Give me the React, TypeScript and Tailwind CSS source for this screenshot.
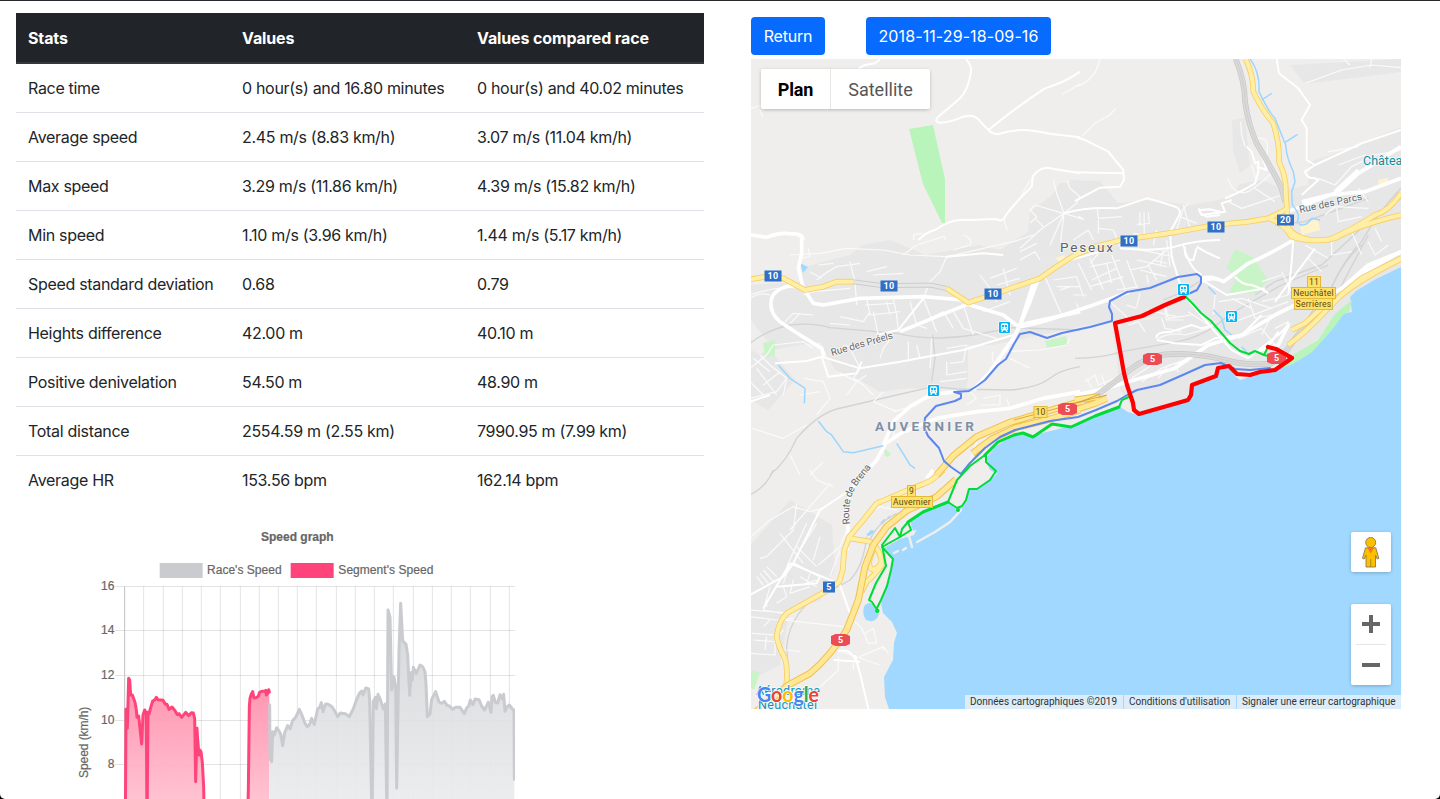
import React from "react";

const rows = [
  ["Race time", "0 hour(s) and 16.80 minutes", "0 hour(s) and 40.02 minutes"],
  ["Average speed", "2.45 m/s (8.83 km/h)", "3.07 m/s (11.04 km/h)"],
  ["Max speed", "3.29 m/s (11.86 km/h)", "4.39 m/s (15.82 km/h)"],
  ["Min speed", "1.10 m/s (3.96 km/h)", "1.44 m/s (5.17 km/h)"],
  ["Speed standard deviation", "0.68", "0.79"],
  ["Heights difference", "42.00 m", "40.10 m"],
  ["Positive denivelation", "54.50 m", "48.90 m"],
  ["Total distance", "2554.59 m (2.55 km)", "7990.95 m (7.99 km)"],
  ["Average HR", "153.56 bpm", "162.14 bpm"],
];

function StatsTable() {
  return (
    <table className="w-[688px] table-fixed border-separate border-spacing-0 text-left text-[16px] leading-6 tracking-[-0.31px] text-[#212529]">
      <colgroup>
        <col className="w-[214px]" />
        <col className="w-[235px]" />
        <col className="w-[239px]" />
      </colgroup>
      <thead className="bg-[#212529] tracking-[-0.12px] text-white">
        <tr className="h-[51px]">
          <th className="border-b-2 border-[#32383e] px-3 font-bold">Stats</th>
          <th className="border-b-2 border-[#32383e] px-3 font-bold">Values</th>
          <th className="border-b-2 border-[#32383e] px-3 font-bold">Values compared race</th>
        </tr>
      </thead>
      <tbody>
        {rows.map((r, n) => (
          <tr key={r[0]} className={n === 0 ? "h-[48px]" : "h-[49px]"}>
            {r.map((c, i) => (
              <td key={i} className={n === 0 ? "px-3 whitespace-nowrap" : "border-t border-[#dee2e6] px-3 whitespace-nowrap"}>{c}</td>
            ))}
          </tr>
        ))}
      </tbody>
    </table>
  );
}

const gridX = [251, 310, 367, 424, 481, 541, 598, 655, 712, 769, 829, 886, 943, 1000, 1060, 1117, 1174, 1231, 1291, 1348];
const ticks: [string, number][] = [["16", 229], ["14", 361], ["12", 496], ["10", 631], ["8", 763]];
const raceLine =
  "M629,585 L630,745 L635,755 L638,665 L643,675 L650,653 L657,663 L662,672 L668,707 L674,668 L683,647 L690,657 L698,632 L708,620 L718,598 L727,618 L734,638 L742,650 L748,645 L755,625 L763,643 L773,597 L779,592 L784,578 L789,605 L796,583 L803,582 L816,590 L824,603 L833,620 L841,609 L856,611 L868,620 L880,596 L889,571 L898,550 L905,543 L909,555 L917,534 L926,537 L929,570 L936,940 L940,575 L946,562 L949,596 L954,553 L962,571 L970,597 L976,582 L981,940 L984,300 L990,322 L995,540 L1002,502 L1007,530 L1010,835 L1017,420 L1022,280 L1028,392 L1038,403 L1043,435 L1049,556 L1053,488 L1057,510 L1060,472 L1069,490 L1080,465 L1088,470 L1095,486 L1098,520 L1102,620 L1110,612 L1115,568 L1127,545 L1137,576 L1145,580 L1153,574 L1161,586 L1168,588 L1178,598 L1187,592 L1200,592 L1213,611 L1220,594 L1226,588 L1231,570 L1239,584 L1245,567 L1257,569 L1265,588 L1274,600 L1285,576 L1293,607 L1296,560 L1300,556 L1306,577 L1313,579 L1320,554 L1326,566 L1331,553 L1335,604 L1341,591 L1348,585 L1355,594 L1360,600 L1362,600 L1363,808";
const segA =
  "M196,960 L198,598 L202,655 L206,505 L209,510 L212,555 L217,555 L225,577 L229,600 L231,622 L236,618 L245,702 L249,615 L254,600 L259,610 L261,960 L264,607 L267,612 L273,590 L278,573 L284,570 L289,562 L294,569 L303,570 L309,571 L316,583 L321,583 L327,598 L336,591 L345,602 L352,614 L357,611 L365,622 L377,607 L386,617 L394,608 L400,609 L404,625 L407,815 L411,655 L413,690 L417,735 L419,720 L423,725 L427,758 L431,830 L433,960";
const segB = "M562,960 L565,840 L568,590 L570,565 L573,555 L578,545 L582,564 L590,562 L595,559 L598,548 L605,544 L614,544 L617,541 L619,555 L624,548 L626,539 L628,546";

function SpeedChart() {
  return (
    <svg className="mt-[6px] ml-11 block h-[289px] w-[455px]" viewBox="0 0 1365 867">
      <defs>
        <linearGradient id="pink" gradientUnits="userSpaceOnUse" x1="0" x2="0" y1="500" y2="867">
          <stop offset="0" stopColor="#ff8eac" />
          <stop offset="1" stopColor="#ffc0d0" />
        </linearGradient>
        <linearGradient id="gray" gradientUnits="userSpaceOnUse" x1="0" x2="0" y1="280" y2="867">
          <stop offset="0" stopColor="#d2d4d7" />
          <stop offset="1" stopColor="#eaebec" />
        </linearGradient>
      </defs>
      <g fontFamily="'Liberation Sans', sans-serif" fill="#666" stroke="#666" strokeWidth=".6" fontSize="36">
        <text x="712" y="93" fontWeight="700" textAnchor="middle" textLength="218">Speed graph</text>
        <rect x="299" y="159" width="129" height="45" fill="#c9cbcf" stroke="none" />
        <text x="441" y="192" textLength="224">Race's Speed</text>
        <rect x="692" y="159" width="129" height="45" fill="#ff447c" stroke="none" />
        <text x="835" y="192" textLength="285">Segment's Speed</text>
        {ticks.map(([t, y]) => (
          <text key={t} x="163" y={y + 12} textAnchor="end">{t}</text>
        ))}
        <text transform="translate(84 804) rotate(-90)" textLength="214">Speed (km/h)</text>
      </g>
      <g stroke="#000" strokeOpacity=".11" strokeWidth="3">
        {ticks.map(([t, y]) => <path key={t} d={`M165,${y + 0.5}H1365`} />)}
        {gridX.map((x) => <path key={x} d={`M${x},229V867`} />)}
      </g>
      <path d="M194,229V867" stroke="#bfbfbf" strokeWidth="3" />
      <path d={raceLine + " L1363,960 L629,960Z"} fill="url(#gray)" fillOpacity=".93" />
      <path d={segA + "Z"} fill="url(#pink)" fillOpacity=".96" />
      <path d={segB + " L628,960Z"} fill="url(#pink)" fillOpacity=".96" />
      <g fill="none" strokeWidth="9" strokeLinejoin="round" strokeLinecap="round">
        <path d={raceLine} stroke="#c9cbcf" />
        <path d={segA} stroke="#ff447c" />
        <path d={segB} stroke="#ff447c" />
      </g>
    </svg>
  );
}

/* Road geometry is stored per map tile, each tile in its own 3x coordinate space. */
type Tile = { at: [number, number]; rail: string; thin: string; mid: string; wide: string; grey: string; road: string; motor: string; stream: string };

const tiles: Tile[] = [
  {
    at: [750, 0],
    rail: "",
    thin: "M937,283L990,252 M3,325L35,315 M30,330L38,350 M762,655Q765,680 775,692 M490,720L492,703L520,700 M585,720V708",
    mid: "M325,205L345,195 375,190 390,178 M648,178Q665,195 663,215Q655,270 630,295Q590,330 565,350Q550,365 570,368Q600,368 640,350Q670,342 685,358L715,390Q728,403 745,402Q800,385 850,392L905,402 990,412 M715,390Q800,320 885,265Q950,245 990,215 M505,720Q530,695 555,690L585,672Q620,657 660,660L735,657Q760,665 762,655Q775,630 845,560L848,530Q865,505 890,503L990,520",
    wide: "M3,705L50,712Q90,695 130,702Q155,700 160,720",
    grey: "", road: "", motor: "", stream: "",
  },
  {
    at: [1075, 55],
    rail: "M540,720L600,680L740,630L870,510L978,430 M760,720Q800,620 860,560Q910,470 978,400 M600,510L690,500L880,430",
    thin: "M0,95Q60,80 75,12 M20,245L60,205L105,180L122,160 M497,200L500,240L510,275 M530,330L545,380 M545,250Q575,245 577,270V300 M458,370L470,395Q490,420 520,410Q560,385 600,345 M690,85L800,45L890,30L978,38 M805,12L825,30 M885,38L890,12 M730,370L780,390L830,335L900,300L978,285 M790,330L870,300 M760,290L850,275 M460,440L500,460L590,430 M560,440L620,420 M540,400L600,440 M785,460L790,500L860,485 M750,480L780,455L880,460 M880,560L900,600L940,570 M560,680L620,660 M700,610L740,650 M690,570L760,610 M830,530L860,600 M900,520L920,560 M770,560V600L830,590 M850,400L880,440",
    mid: "M0,245L30,255L100,290L145,345L147,375L135,395L75,398L0,438 M0,352L143,355 M605,12L612,55L670,100L705,150L680,195L695,220L695,315L720,330L690,350Q695,370 720,370L730,375L680,420 M720,330L860,265L978,225 M450,430Q500,410 540,385L550,350L550,320L540,325L530,290L515,275 M560,300L575,345L545,335 M370,460L380,480L450,470L440,445L470,435 M655,555L650,620L640,720 M480,665Q500,690 530,690Q560,700 580,715",
    wide: "M655,555Q580,600 520,625L480,655L445,680Q410,660 380,670 M640,470L690,450L790,410L850,355L978,275 M680,440L760,420L870,410L978,370 M800,720L850,660L978,590 M780,410L850,345",
    grey: "M482,12Q510,80 510,140Q520,210 545,265Q590,340 620,400L630,440",
    road: "M0,600L60,575L140,555L300,532L420,510L520,500L580,490L640,460 M580,490Q620,500 650,545Q690,560 760,555Q840,520 900,480Q940,470 978,415 M640,520Q680,570 780,550Q850,510 978,480 M800,720Q860,670 978,612 M512,12Q535,60 535,110Q560,165 595,205Q615,270 612,320Q635,370 632,410L640,520",
    motor: "",
    stream: "M525,12Q555,50 552,110Q580,170 600,190Q620,240 632,270Q635,310 655,350L660,380L650,410L652,450Q680,480 665,505 M560,135L590,115 M630,262L668,238 M670,505Q690,520 710,490L735,495",
  },
  {
    at: [1020, 180],
    rail: "M430,360L490,335L545,300",
    thin: "M100,0L110,40L132,100 M0,55L30,0 M30,130L50,110L30,90L45,75L130,100 M45,115L70,140 M132,100L90,195 M132,100L122,185 M132,100L190,118L175,108 M132,100L170,70L180,50L150,25L140,0 M132,100L60,150L0,205 M50,190L0,215 M60,240L45,215L0,240 M232,85L235,115L305,110 M235,120V160 M205,150L160,180 M205,150L220,180 M235,145L280,150L300,200 M360,95V130 M372,97L373,170 M385,97L388,130L350,135 M355,130L372,135 M340,160L400,170 M410,150L400,195 M490,75L505,130L515,150 M505,70L490,85L470,150 M480,110L530,130 M210,235L250,330 M240,215L210,250 M175,250L215,330 M100,300L170,290L190,350 M110,320L180,320 M120,330L150,320 M160,345L200,345 M210,260L260,250L300,240 M215,300L290,265 M210,320L310,290 M260,250L275,310 M275,225L320,340 M320,240L350,320 M330,270L380,260L440,210 M340,205L460,230 M350,240L440,260 M360,270L440,290 M385,255L410,300 M400,240L440,250 M430,210L420,260 M440,180L450,260 M380,285L385,310 M355,320L290,330 M360,340L350,380 M320,375L350,385 M270,365L330,420 M170,370L180,400 M75,290L125,405 M435,385L440,420L490,420 M380,390L470,410",
    mid: "M132,100Q200,80 290,85L380,55Q420,65 460,78Q485,85 478,105Q465,130 450,155L455,230L470,280L485,330 M600,105L560,110Q535,100 540,90L570,88L600,95 M300,205Q400,215 465,200Q530,180 600,180 M150,240L240,215 M495,200Q490,240 520,240L530,205 M530,200Q560,220 600,235 M490,195Q510,270 545,285",
    wide: "M0,435L40,310 M0,440Q60,430 130,405L220,375L330,335 M545,305Q570,290 600,300",
    grey: "",
    road: "",
    motor: "", stream: "",
  },
  {
    at: [750, 235],
    rail: "M0,325Q50,285 120,270Q190,262 240,278L440,295Q550,320 670,300L790,278L990,285 M60,720Q110,680 140,610Q200,540 260,522L440,480L550,455L620,462L780,465Q860,460 900,430Q930,405 990,395 M548,300L555,370L545,440",
    thin: "M200,135Q230,110 260,95L330,85 M205,90L250,85 M175,40L180,65L150,70 M120,60L210,55L290,40L400,45L480,60L590,65L700,40L790,20L850,0 M460,60L500,30L580,5 M590,65L570,110L540,140L520,190 M640,0Q670,10 660,30L610,45 M300,80L315,140L320,210 M350,110L410,95 M370,120L460,115 M350,190L360,240L450,230 M345,210L430,205 M370,230L385,300 M410,200L420,240 M430,190L440,240L445,290 M270,245L340,260L360,230 M240,265L300,270 M160,180L190,170L300,160 M0,190Q30,170 60,180 M105,260L130,235L190,240 M120,265L150,235 M0,180Q90,150 150,160 M215,130L180,110 M480,200L500,270L530,280 M520,190L560,290 M540,250L580,230L610,280 M610,230L640,280L740,310 M640,210L670,300 M690,120L720,160L740,200 M760,100L780,180 M720,130L800,100 M740,150L810,130 M700,230L780,200 M430,300L400,340L390,370 M475,320V380 M500,330L510,370 M545,310L540,400 M590,340L650,330L640,380L600,385 M590,380V420L650,410 M300,340L330,400L310,430L340,450L370,480 M270,415L320,440L350,420 M320,440L290,480 M320,340L280,330 M400,470L370,500L440,530 M160,430L220,440L240,490L200,540 M150,480L210,470 M0,400L50,360L70,330L160,320L190,340 M30,360L60,390L110,430L100,480 M0,440L40,480 M0,490L80,470L110,430 M20,400L80,480 M40,450L90,410 M10,370L60,410 M5,580L100,610L170,570 M120,660L150,720 M430,530L500,510 M440,540L430,600L480,590 M180,720L220,680 M570,440L650,430 M660,470L680,490L650,510 M700,490L750,480V510L690,510 M730,350Q720,380 740,390 M770,350L870,345L950,330L960,310 M780,370L840,400 M780,520L770,490 M630,640L680,620L660,680",
    mid: "M520,190L445,285L380,300 M75,385L170,378L215,365L330,400L450,380L640,345L790,300 M215,365L235,425L320,415L335,380 M590,65L700,55L760,60 M0,500L60,480 M445,545Q530,470 620,470",
    wide: "M155,0V55L145,100L160,160L190,205L220,210L330,190L520,185L640,195L660,210L760,240L805,275L830,265L990,230 M130,150Q75,160 65,190Q55,230 90,260L150,300L215,340L222,365 M450,290L560,245L660,205 M865,130L840,200L810,270L790,310L720,410L670,465 M400,630L430,560L480,515L540,480L620,470 M400,630L460,590L560,550L680,530L780,520L880,490L990,470 M405,630L380,675L340,720",
    grey: "",
    road: "M0,133L50,125L100,130L165,165L220,155L260,140L310,140 M590,160L655,203L730,178L870,130L920,95L990,50",
    motor: "M560,720L610,662L680,605L780,562L870,535L990,500 M668,655L725,612L800,577L900,552L990,525",
    stream: "M85,390L120,430L165,460L163,505 M205,558L230,590L245,600L280,650L310,653L400,632 M440,625L465,665L480,690L495,700",
  },
  {
    at: [1075, 235],
    rail: "M0,370Q80,370 140,350L310,320Q400,300 460,240L620,150L760,90 M760,180Q800,80 860,30 M770,210Q820,110 880,0",
    thin: "M160,270L190,260L210,290 M260,250L270,280L320,290 M270,210L280,250L350,240 M340,230L400,270 M420,180L415,240 M430,200L500,190L590,220 M470,190L530,220 M520,190L540,250L590,240 M560,200L640,180 M480,260L560,230L640,200 M620,110L650,170 M250,310Q290,290 330,300L400,280L420,260 M30,440L60,420L70,450L120,430 M50,460L35,430 M80,420L90,450 M200,440L260,400L340,370 M170,430L230,390 M250,430L280,390L340,380 M300,390L310,410 M490,310L560,280L600,330 M590,240L560,300 M600,280L640,260L620,310",
    mid: "M245,310Q240,290 290,290L350,270L380,280L420,270 M245,315L300,325L380,330L420,310 M335,190L420,290L470,345L520,370 M420,310L500,300L560,240 M600,200L720,40 M520,370L570,330L610,300L645,265 M570,350L610,290 M390,140L455,180L570,160",
    wide: "M0,480Q100,460 160,440L300,400L400,330L500,300L600,240L700,190 M540,350L610,330L640,270 M700,220L800,160L880,90L978,50",
    grey: "M30,505Q110,450 170,400Q220,365 270,358Q360,352 450,375Q530,395 590,385Q630,360 650,325L700,260L720,230",
    road: "M640,330Q700,285 750,230Q800,175 860,130L978,70 M650,285L690,265L740,220",
    motor: "M0,495L70,485 M0,525L60,505L95,490",
    stream: "M400,155L422,178 M415,225L440,250L450,285L470,300 M500,335L515,350",
  },
  {
    at: [750, 470],
    rail: "M0,75Q50,50 70,0 M350,200Q340,290 300,330Q260,355 230,360Q120,420 110,530L118,640 M360,210Q380,160 440,130",
    thin: "M3,200L60,150L130,110L180,125L220,115 M120,180L240,40 M140,100L130,180L50,260L30,265 M90,190L160,280 M140,230L200,290 M170,160L110,290 M200,160L150,240 M210,200L190,270 M20,320L40,345 M30,310L55,340 M40,300L70,335 M50,290L80,320 M120,280L100,340 M130,330L120,370L180,350 M150,320L200,350 M180,310L170,340L200,330 M100,350L110,380L80,400 M60,350L40,420L100,430 M50,380V410 M0,420L130,430 M0,440L80,450L130,445 M40,470L60,450 M5,490L75,495V555L0,550 M10,510L70,515 M50,500L45,540 M100,450L280,470 M100,480L75,510 M110,540L150,545 M205,285L270,230L290,180 M240,320L270,240 M315,455L335,475L355,520L380,518L370,475L345,490 M265,560V600L200,660 M330,560L400,530L415,550 M370,120L390,110L440,120 M380,100L400,80 M180,0L200,30L250,50 M400,530V540 M260,540L390,585 M310,580V600",
    mid: "M0,375L100,320L130,280L210,120L300,60 M300,60L350,0 M40,415L120,280L230,325L270,345L300,430 M130,280L210,320L200,340L80,350 M315,555L335,630L355,717 M250,570L330,575 M265,545Q300,530 320,575",
    wide: "M345,0L310,50L290,100L295,195L290,240 M530,25L550,0",
    grey: "",
    road: "M580,0Q545,35 520,42L470,62L380,100L340,150L298,200L283,240L278,300L268,335L240,357L110,430Q85,455 80,500Q85,530 105,565Q115,600 108,650 M300,205L360,215Q395,240 395,285Q380,310 350,335L335,365 M370,240Q345,290 370,300Q390,290 395,275",
    motor: "M618,28L560,80L470,122L410,170L370,225L345,290L325,390L290,480Q240,560 180,610L115,645L0,740",
    stream: "",
  },
];

type Key = "rail" | "thin" | "mid" | "wide" | "grey" | "road" | "motor" | "stream";

function Layer({ k, color, width }: { k: Key; color: string; width: number }) {
  return (
    <g fill="none" stroke={color} strokeWidth={width} strokeLinejoin="round">
      {tiles.map((t, i) => (
        <path key={i} d={t[k]} transform={`translate(${t.at[0]} ${t.at[1]}) scale(.33333)`} />
      ))}
    </g>
  );
}

function Shield({ x, y, t }: { x: number; y: number; t: string }) {
  const w = t.length > 1 ? 17 : 12;
  return (
    <g>
      <rect x={x - w / 2} y={y - 5.5} width={w} height="11" fill="#2f6fc7" />
      <text x={x} y={y + 3.3} fontSize="9" fontWeight="700" fill="#fff" textAnchor="middle" letterSpacing=".3">{t}</text>
    </g>
  );
}

function MotorShield({ x, y }: { x: number; y: number }) {
  return (
    <g>
      <path d={`M${x - 9.5},${y - 4}L${x - 5},${y - 6}H${x + 5}L${x + 9.5},${y - 4}V${y + 4}L${x + 5},${y + 6}H${x - 5}L${x - 9.5},${y + 4}Z`} fill="#ee4c55" />
      <text x={x} y={y + 3.3} fontSize="9" fontWeight="700" fill="#fff" textAnchor="middle">5</text>
    </g>
  );
}

function Exit({ x, y, w, t }: { x: number; y: number; w: number; t: string }) {
  return (
    <g>
      <rect x={x - w / 2} y={y - 5.5} width={w} height="11" fill="#ffe168" stroke="#e3b93a" strokeWidth="1" />
      <text x={x} y={y + 3.2} fontSize="8.6" fill="#5c4a14" textAnchor="middle" letterSpacing=".2">{t}</text>
    </g>
  );
}

function Station({ x, y }: { x: number; y: number }) {
  return (
    <g transform={`translate(${x} ${y})`}>
      <rect x="-6" y="-6" width="12" height="12" rx="1" fill="#fff" />
      <rect x="-5.5" y="-5.5" width="11" height="11" rx="1" fill="#00b5f8" />
      <path d="M-3.6,-2.5Q-3.6,-4.2 -2,-4.2H2Q3.6,-4.2 3.6,-2.5V1.5Q3.6,2.6 2.6,2.6L3.4,4.2H1.8L1,2.8H-1L-1.8,4.2H-3.4L-2.6,2.6Q-3.6,2.6 -3.6,1.5Z" fill="#fff" />
      <path d="M-2.4,-2.5H-.4V-.3H-2.4ZM.4,-2.5H2.4V-.3H.4ZM-2.3,.8H-1.2V1.8H-2.3ZM1.2,.8H2.3V1.8H1.2Z" fill="#00b5f8" />
    </g>
  );
}

function Terrain() {
  return (
    <svg className="block h-[650px] w-[650px]" viewBox="751 59 650 650" fontFamily="Roboto, sans-serif">
      <rect x="751" y="59" width="650" height="650" fill="#efeeed" />
      <path fill="#e7e7e7" d="M751,285L800,282L803,268L822,262L850,255L862,245L890,240L925,255L980,245L1000,250L1028,232L1030,212L1052,195L1060,183L1100,181L1118,203L1150,200L1190,205L1230,198L1240,184L1262,180L1285,190L1308,185L1310,162L1345,150L1401,127V275L1290,360L1240,375L1218,368L1215,378L1192,385L1188,400L1137,414L1120,390L1112,325L1165,317L1146,318L1110,322L1060,340L1000,345L968,345L968,380L880,392L860,380L835,370L820,342L770,350L795,380L768,410L751,400Z" />
      <path fill="#efeeed" d="M751,320L770,345L760,355L751,350Z M970,350L1112,320L1118,370L1040,388L985,388Z" />
      <path fill="#e7e7e7" d="M751,545L790,500L832,525L835,570L820,600L790,610L780,665L751,680Z M1232,120L1245,118L1250,165L1240,173L1233,150Z M1290,65L1401,59V72L1305,84Z M905,385L968,380L965,390L905,388Z M1070,180L1098,181L1112,196L1085,205Z" />
      <path fill="#b9f4bb" d="M909,129L933,125L945,179V223L942,223L923,184Z" />
      <path fill="#c9f4c7" d="M1235,249L1253,257L1268,280L1256,293L1229,294L1236,278L1227,268Z M763,343L775,340L775,356L765,357Z M1045,341L1066,336L1068,345L1047,348Z M751,670L760,673L754,690L751,688Z M884,448L891,454L888,457L885,456Z" />
      <path fill="#fff3cc" d="M1300,227L1318,218L1320,230L1302,235Z M1378,180L1388,178V185L1379,187Z M1055,258L1065,255L1063,265Z" />
      <path fill="#a0d8ff" d="M1401,267L1376,279L1356,291L1350,297L1352,312L1342,314L1330,331L1310,353L1293,363L1275,370L1255,375L1240,380L1235,376L1230,367L1218,370L1216,377L1192,385L1189,400L1138,415L1128,412L1120,407L1075,425L1030,436L1016,433L995,447L985,460L990,470L997,474L980,488L968,490L963,507L956,509L948,502L910,520L914,535L900,539L884,548L893,560L887,587L881,603L883,613L892,622L897,633L894,643L893,660L884,677L885,697L889,709H1401Z" />
      <path fill="#a0d8ff" d="M865,605Q872,600 874,608L879,614Q876,624 866,620Q861,612 865,605Z M866,535L871,530L876,531L869,536Z M880,523L884,519L886,520L883,524Z M887,518L890,515L890,519Z M800,263L808,267L803,273Z" />
      <path fill="none" stroke="#efeeed" strokeWidth="2.5" strokeLinecap="round" d="M917,542L935,532L950,522L961,510 M909,536L912,547 M894,553L898,551 M903,550L906,548 M907,535L914,532L913,534" />
      <path fill="#b9f4bb" d="M1352,300L1335,314L1318,340L1293,355L1280,366L1262,371L1270,372L1293,364L1312,352L1332,330L1343,315L1349,312Z" />
      <Layer k="rail" color="#d2d3d5" width={4} />
      <Layer k="thin" color="#fafafa" width={3.7} />
      <Layer k="mid" color="#fff" width={6} />
      <Layer k="wide" color="#fff" width={11} />
      <Layer k="stream" color="#9dd6fd" width={4.5} />
      <path fill="none" stroke="#cccdce" strokeWidth="5" d="M853,281.7L883,285.7L930,285L947,288.5" />
      <path fill="none" stroke="#e6e6e6" strokeWidth="3" d="M853,281.7L883,285.7L930,285L947,288.5" />
      <Layer k="grey" color="#c6c6c6" width={17} />
      <Layer k="grey" color="#dadada" width={13} />
      <Layer k="grey" color="#c8c8c8" width={2} />
      <Layer k="road" color="#f7ce62" width={17} />
      <Layer k="road" color="#ffeea3" width={12} />
      <Layer k="motor" color="#f2bf4c" width={21} />
      <Layer k="motor" color="#ffe793" width={15} />
      <path fill="none" stroke="#c99a2a" strokeWidth=".8" d="M1014,420L1040,413L1080,402L1100,394 M1070,404L1107,395" />

      <g fill="none" strokeLinejoin="round" strokeLinecap="round">
        <path stroke="#5b87ee" strokeWidth="2" d="M1184,296L1197,290L1201,283V277L1197,274L1178,277L1150,288L1127,292L1110,301L1109,307L1112,314V321L1090,327L1062,333L1047,338L1030,332L1020,334L1014,344L1006,359L998,365L985,380L977,386L969,391L954,392L961,394V398L955,401L936,406L925,418L924,427L928,436L939,448L944,461L951,467L961,474L970,463L985,448L1000,437L1015,430L1050,421L1078,417L1096,410L1117,401L1129,394L1137,390L1160,385L1185,374L1205,365L1221,363L1235,369L1250,370L1270,368" />
        <path stroke="#00db38" strokeWidth="2" d="M1185,296L1193,304L1201,313L1211,321L1230,343L1240,351L1249,354L1255,351L1264,355L1268,347L1264,355L1272,357 M1131,396L1122,400L1119,407" />
        <path stroke="#00db38" strokeWidth="3" d="M1119,407L1095,416L1071,427L1065,426L1052,424L1033,437L1023,433L1014,435L998,442L985,455 M948,502L923,512L908,522" />
        <path stroke="#00db38" strokeWidth="2" d="M985,455L970,466L957,480L948,502L957,508L962,506L966,500L969,489L977,489L990,480L996,471L986,462V455 M908,522L911,530L900,537L882,547L893,559L891,570L887,586L881,600L877,608 M908,522L902,529L900,537L895,528L882,545L886,566L876,583L869,600L872,602L877,610" />
        <circle cx="958" cy="510" r="1" stroke="#00db38" strokeWidth="2" />
        <circle cx="877.3" cy="610.7" r="1.2" stroke="#00db38" strokeWidth="2" />
        <path stroke="#f00" strokeWidth="4.2" d="M1184,297L1165,305L1142,316L1115,323L1119,345L1124,373L1127,385L1133,403L1134,410L1139,414L1188,400L1191,395L1192,385L1216,376L1218,368L1229,366L1237,374L1250,375L1260,372L1275,370L1292,358L1276,349L1268,347" />
      </g>

      <Shield x={773} y={276} t="10" />
      <Shield x={889} y={286} t="10" />
      <Shield x={993} y={294} t="10" />
      <Shield x={1129} y={241} t="10" />
      <Shield x={1216} y={227} t="10" />
      <Shield x={1285.5} y={220} t="20" />
      <Shield x={829} y={587} t="5" />
      <MotorShield x={1152.5} y={359} />
      <MotorShield x={1067.5} y={409} />
      <MotorShield x={1276.5} y={358} />
      <MotorShield x={840.5} y={640} />
      <path d="M1276,349L1292,358L1279,367" fill="none" stroke="#f00" strokeWidth="3.8" strokeLinejoin="round" />
      <Exit x={1040.5} y={412} w={13} t="10" />
      <Exit x={911.5} y={491} w={8} t="9" />
      <Exit x={912} y={502} w={41} t="Auvernier" />
      <Exit x={1314} y={282} w={13} t="11" />
      <Exit x={1313.5} y={293} w={44} t="Neuchâtel" />
      <Exit x={1313.5} y={304} w={38} t="Serrières" />
      <Station x={1004.5} y={327.5} />
      <Station x={933.5} y={390.5} />
      <Station x={1183.5} y={289.5} />
      <Station x={1231.5} y={316.5} />

      <g paintOrder="stroke" stroke="#f5f5f5" strokeWidth="2" strokeLinejoin="round">
        <text x="1060" y="252" fontSize="13.5" fill="#5f6368" textLength="53">Peseux</text>
        <text x="875" y="431" fontSize="13.5" fontWeight="700" fill="#7f8fa6" strokeOpacity=".6" textLength="99">AUVERNIER</text>
        <text x="1363" y="165" fontSize="12.5" fill="#0f8e99">Châtea</text>
        <text fontSize="10" fill="#62686d" transform="translate(832 356) rotate(-16)" textLength="64">Rue des Préels</text>
        <text fontSize="10" fill="#62686d" transform="translate(1300 213) rotate(-12)" textLength="64">Rue des Parcs</text>
        <path id="brena" d="M850,524Q846,500 858,484L874,464" fill="none" stroke="none" />
        <text fontSize="10" fill="#62686d"><textPath href="#brena" textLength="63">Route de Brena</textPath></text>
        <g fontSize="12.5" fill="#0f94c0">
          <text x="756" y="695" textLength="64">Aérodrome</text>
          <text x="758" y="709" textLength="59">Neuchâtel</text>
        </g>
      </g>
      <text x="757" y="702" fontSize="20" fontFamily="Lato, sans-serif" fontWeight="700" paintOrder="stroke" stroke="#fff" strokeWidth="1.4" textLength="62" lengthAdjust="spacingAndGlyphs">
        <tspan fill="#4285f4">G</tspan><tspan fill="#ea4335">o</tspan><tspan fill="#fbbc05">o</tspan><tspan fill="#4285f4">g</tspan><tspan fill="#34a853">l</tspan><tspan fill="#ea4335">e</tspan>
      </text>
    </svg>
  );
}

function RaceMap() {
  return (
    <div className="relative h-[650px] w-[650px] overflow-hidden font-[Roboto,sans-serif]">
      <Terrain />
      <div className="absolute top-[10px] left-[10px] flex h-10 rounded-[2px] bg-white text-[18px] shadow-[0_1px_4px_-1px_rgba(0,0,0,0.35)]">
        <div className="flex w-[70px] items-center justify-center border-r border-[#e6e6e6] font-bold tracking-[-0.1px] text-black">Plan</div>
        <div className="flex w-[99px] items-center justify-center text-[#565656]">Satellite</div>
      </div>
      <div className="absolute top-[473px] right-[10px] flex size-10 items-center justify-center rounded-[2px] bg-white shadow-[0_1px_4px_-1px_rgba(0,0,0,0.35)]">
        <svg className="h-[32px] w-[20px]" viewBox="0 0 20 32">
          <path d="M4.5,11.8H14.8L17.8,22.3L16.2,23L14.5,19.2V31H5V19.2L3.2,23L1.5,22.3Z" fill="#fdbf00" stroke="#8b7b4e" strokeWidth=".9" />
          <path d="M6.5,12H12.8L9.7,17.5Z" fill="#ef7c1a" />
          <circle cx="9.7" cy="6.5" r="5" fill="#fdbf00" stroke="#8b7b4e" strokeWidth=".9" />
          <path d="M9.7,23V31" stroke="#a5852d" strokeWidth=".9" />
        </svg>
      </div>
      <div className="absolute top-[545px] right-[10px] flex h-[81px] w-10 flex-col items-center rounded-[2px] bg-white shadow-[0_1px_4px_-1px_rgba(0,0,0,0.35)]">
        <svg className="h-10 w-10" viewBox="0 0 40 40"><path d="M11,20H29M20,11V29" stroke="#666" strokeWidth="4" /></svg>
        <div className="h-px w-[30px] bg-[#e6e6e6]" />
        <svg className="h-10 w-10" viewBox="0 0 40 40"><path d="M11,20H29" stroke="#666" strokeWidth="4" /></svg>
      </div>
      <div className="absolute right-0 bottom-0 flex h-[14px] gap-px text-[10px] leading-[14px] whitespace-nowrap text-[#333]">
        <span className="w-[158px] bg-[#dcedf9] pl-[5px]">Données cartographiques ©2019</span>
        <span className="w-[112px] bg-[#dcedf9] pl-[5px]">Conditions d'utilisation</span>
        <span className="w-[164px] bg-[#dcedf9] pl-[5px]">Signaler une erreur cartographique</span>
      </div>
    </div>
  );
}

export default function App() {
  return (
    <div className="h-[799px] w-[1440px] overflow-hidden bg-black">
      <main className="flex h-full overflow-hidden rounded-b-[5px] border-t border-[#29282a] bg-white font-[Inter,sans-serif]">
        <section className="w-[751px] shrink-0 pt-3 pl-4">
          <StatsTable />
          <SpeedChart />
        </section>
        <section className="pt-4">
          <div className="mb-1 flex gap-[41px] text-[16px] text-white">
            <button className="h-[38px] w-[74px] rounded bg-[#076bff] tracking-[-0.2px]">Return</button>
            <button className="h-[38px] w-[185px] rounded bg-[#076bff] tracking-[0.1px]">2018-11-29-18-09-16</button>
          </div>
          <RaceMap />
        </section>
      </main>
    </div>
  );
}
